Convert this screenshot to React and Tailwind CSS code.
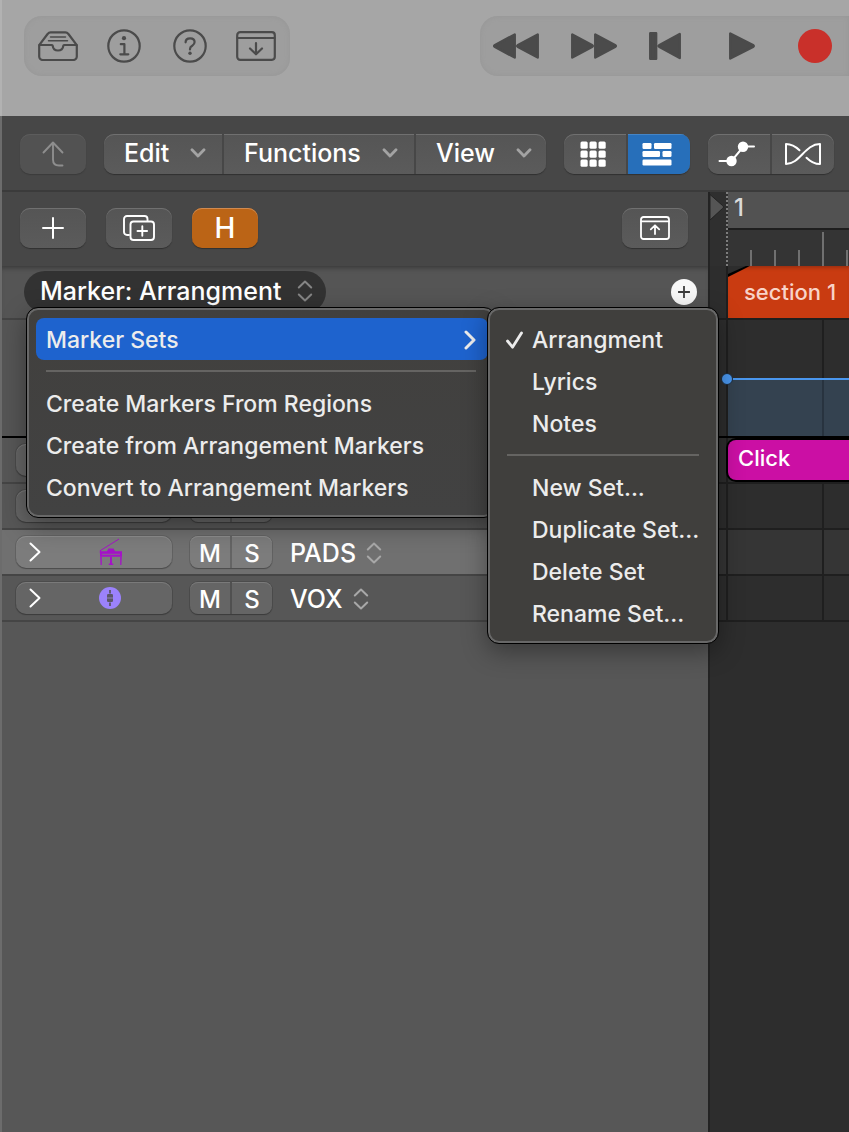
import clsx from 'clsx';

const TICKS = Array.from({ length: 40 }, (_, i) => i);

const RAISED = 'bg-gradient-to-b from-[#555555] to-[#5b5b5b] shadow-[inset_0_1px_0_#707070,0_1px_1px_#303030]';

function InboxIcon() {
  return (
    <svg width="40" height="30" viewBox="0 0 40 30" fill="none" stroke="currentColor" strokeWidth="2.2" strokeLinejoin="round" strokeLinecap="round" aria-hidden="true">
      <path d="M1.2 14.2 9.6 3c.8-1 1.6-1.6 3-1.6h14.8c1.4 0 2.2.6 3 1.6l8.4 11.2V25.500a3.500 3.500 0 0 1-3.500 3.500H4.700A3.500 3.500 0 0 1 1.200 25.500Z" />
      <path d="M1.500 14H14c.4 0 .6.3.7.8.4 3.100 2.500 4.700 5.300 4.700s4.900-1.600 5.300-4.700c.1-.5.3-.8.7-.8h12.500" />
      <path strokeWidth="1.500" d="M12.500 6h15M10.500 9.800h19" />
    </svg>
  );
}

function InfoIcon() {
  return (
    <svg width="34" height="34" viewBox="0 0 34 34" fill="none" stroke="currentColor" strokeWidth="2.2" strokeLinecap="round" strokeLinejoin="round" aria-hidden="true">
      <circle cx="17" cy="17" r="15.700" />
      <circle cx="17" cy="9.200" r="2.100" fill="currentColor" stroke="none" />
      <path d="M13.800 15.200h3.600v10M13.300 25.300h8" />
    </svg>
  );
}

function HelpIcon() {
  return (
    <svg width="34" height="34" viewBox="0 0 34 34" fill="none" stroke="currentColor" strokeWidth="2.2" strokeLinecap="round" strokeLinejoin="round" aria-hidden="true">
      <circle cx="17" cy="17" r="15.700" />
      <path d="M12.600 13.300c0-2.400 1.800-4 4.500-4 2.600 0 4.500 1.500 4.500 3.800 0 1.800-.9 2.700-2.400 3.700-1.500.9-2.200 1.700-2.200 3.100v.5" />
      <circle cx="17" cy="24.300" r="1.700" fill="currentColor" stroke="none" />
    </svg>
  );
}

function WindowDownIcon() {
  return (
    <svg width="40" height="30" viewBox="0 0 40 30" fill="none" stroke="currentColor" strokeWidth="2.2" strokeLinecap="round" strokeLinejoin="round" aria-hidden="true">
      <rect x="1.200" y="1.200" width="37.600" height="27.600" rx="3" />
      <path d="M1.500 7h37M20 12v11M14 17.500l6 5.800 6-5.800" />
    </svg>
  );
}

function WindowUpIcon() {
  return (
    <svg width="30" height="24" viewBox="0 0 30 24" fill="none" stroke="currentColor" strokeWidth="1.800" strokeLinecap="round" strokeLinejoin="round" aria-hidden="true">
      <rect x="1" y="1" width="28" height="22" rx="2.500" />
      <path d="M1.500 5.300h27M15 18V9.500M10.800 13.300 15 9.300l4.200 4" />
    </svg>
  );
}

function RewindIcon() {
  return (
    <svg width="46" height="26" viewBox="0 0 46 26" fill="currentColor" stroke="currentColor" strokeWidth="2.500" strokeLinejoin="round" aria-hidden="true">
      <path d="M21.700 1.500v23L2 14q-1.600-1 0-2ZM44.700 1.500v23L25 14q-1.600-1 0-2Z" />
    </svg>
  );
}

function ForwardIcon() {
  return (
    <svg width="46" height="26" viewBox="0 0 46 26" fill="currentColor" stroke="currentColor" strokeWidth="2.500" strokeLinejoin="round" aria-hidden="true">
      <path d="M1.300 1.500v23L21 14q1.600-1 0-2ZM24.300 1.500v23L44 14q1.600-1 0-2Z" />
    </svg>
  );
}

function ToStartIcon() {
  return (
    <svg width="32" height="28" viewBox="0 0 32 28" fill="currentColor" stroke="currentColor" strokeWidth="2.500" strokeLinejoin="round" aria-hidden="true">
      <path d="M1.300 1.300h5.800v25.400H1.300ZM30.700 2v24L10.500 15q-1.600-1 0-2Z" />
    </svg>
  );
}

function PlayIcon() {
  return (
    <svg width="26" height="28" viewBox="0 0 26 28" fill="currentColor" stroke="currentColor" strokeWidth="2.500" strokeLinejoin="round" aria-hidden="true">
      <path d="M1.300 1.500v25L24 15q1.500-1 0-2Z" />
    </svg>
  );
}

function UpLevelIcon() {
  return (
    <svg width="22" height="26" viewBox="0 0 22 26" fill="none" stroke="currentColor" strokeWidth="1.900" strokeLinecap="round" strokeLinejoin="round" aria-hidden="true">
      <path d="M1.500 11.500 11 1.500l9.500 10M11 2v16.500c0 4 2.200 6 6 6h3.500" />
    </svg>
  );
}

function ChevronDown() {
  return (
    <svg width="16" height="10" viewBox="0 0 16 10" fill="none" stroke="#a3a3a3" strokeWidth="2.800" strokeLinecap="round" strokeLinejoin="round" aria-hidden="true">
      <path d="M2 1.800 8 8l6-6.200" />
    </svg>
  );
}

function UpDownIcon({ className }) {
  return (
    <svg width="16" height="22" viewBox="0 0 16 22" fill="none" stroke="currentColor" strokeWidth="2" strokeLinecap="round" strokeLinejoin="round" className={className} aria-hidden="true">
      <path d="M1.800 7.500 8 1.500l6.200 6M1.800 14.500l6.200 6 6.200-6" />
    </svg>
  );
}

function GridIcon() {
  return (
    <svg width="26" height="26" viewBox="0 0 26 26" fill="currentColor" aria-hidden="true">
      {[0, 9, 18].map((y) => [0, 9, 18].map((x) => <rect key={`${x}-${y}`} x={x + 0.500} y={y + 0.500} width="7.200" height="7.200" rx="1.500" />))}
    </svg>
  );
}

function TracksIcon() {
  return (
    <svg width="30" height="24" viewBox="0 0 30 24" fill="currentColor" aria-hidden="true">
      <rect x="0.500" y="1" width="9" height="6" rx="1.200" />
      <rect x="12" y="1" width="17.500" height="6" rx="1.200" />
      <rect x="0.500" y="9" width="17.500" height="6" rx="1.200" />
      <rect x="20.500" y="9" width="9" height="6" rx="1.200" />
      <rect x="0.500" y="17.500" width="29" height="6" rx="1.200" />
    </svg>
  );
}

function AutomationIcon() {
  return (
    <svg width="38" height="26" viewBox="0 0 38 26" fill="none" stroke="currentColor" strokeWidth="2" strokeLinecap="round" aria-hidden="true">
      <path d="M1.500 20h12l12-14.500H36" />
      <circle cx="13.500" cy="20" r="5.200" fill="currentColor" stroke="none" />
      <circle cx="25" cy="5.800" r="5.200" fill="currentColor" stroke="none" />
    </svg>
  );
}

function FlexIcon() {
  return (
    <svg width="36" height="22" viewBox="0 0 36 22" fill="none" stroke="currentColor" strokeWidth="2" strokeLinecap="round" strokeLinejoin="round" aria-hidden="true">
      <path d="M1 1v20C15 21 20 1 35 1v20c-6 0-10-2.800-13.500-6.300M1 1c6 0 10 2.800 13.500 6.300" />
    </svg>
  );
}

function PlusIcon() {
  return (
    <svg width="22" height="22" viewBox="0 0 22 22" stroke="currentColor" strokeWidth="2" strokeLinecap="round" aria-hidden="true">
      <path d="M11 1v20M1 11h20" />
    </svg>
  );
}

function DuplicateIcon() {
  return (
    <svg width="32" height="26" viewBox="0 0 32 26" fill="none" stroke="currentColor" strokeWidth="1.900" strokeLinecap="round" strokeLinejoin="round" aria-hidden="true">
      <path d="M6 20H4a3 3 0 0 1-3-3V4a3 3 0 0 1 3-3h17.500a3 3 0 0 1 3 3v1.500" />
      <rect x="7.500" y="6.500" width="23.500" height="18.500" rx="3" />
      <path d="M19.300 11.200v9.600M14.500 16h9.600" />
    </svg>
  );
}

function DisclosureIcon() {
  return (
    <svg width="12" height="20" viewBox="0 0 12 20" fill="none" stroke="currentColor" strokeWidth="2" strokeLinecap="round" strokeLinejoin="round" aria-hidden="true">
      <path d="m1.500 1.500 9 8.500-9 8.500" />
    </svg>
  );
}

function PianoIcon() {
  return (
    <svg width="24" height="28" viewBox="0 0 24 28" fill="#a512c8" aria-hidden="true">
      <path d="M1 12.800 20 1M1.300 12.300v3" stroke="#a512c8" strokeWidth="1" />
      <path d="M9.500 10.500h5l1.500 2.800h7v5.500H1v-5.500h7Z" />
      <path d="M3 16.300h18" stroke="#7c7c7c" strokeWidth="0.800" />
      <path d="M1.200 18.800h1.600v8.200H1.600ZM21.200 18.800h1.600l-.4 8.200h-1.200ZM11 18.800h2v6.700h1.200V27H9.800v-1.500H11Z" />
    </svg>
  );
}

function KnobIcon() {
  return (
    <svg width="22" height="22" viewBox="0 0 22 22" aria-hidden="true">
      <circle cx="11" cy="11" r="11" fill="#9b82fb" />
      <path d="M11 3v3.500M11 15.500V19" stroke="#5b5668" strokeWidth="1.800" />
      <rect x="8" y="7" width="6" height="8" rx="1.200" fill="#5b5668" />
      <path d="M8 11h6" stroke="#8d83b8" strokeWidth="1" />
    </svg>
  );
}

function IconButton({ label, className, children }) {
  return (
    <button type="button" aria-label={label} className={clsx('flex items-center justify-center', className)}>
      {children}
    </button>
  );
}

function TransportBar() {
  return (
    <header className="flex h-[116px] shrink-0 items-start gap-[190px] overflow-hidden border-l-2 border-[#b2b2b2] bg-[#a6a6a6] pt-4 pl-[22px] text-[#4b4b4b]">
      <div className="flex h-[60px] w-[266px] shrink-0 items-center justify-between rounded-[18px] bg-[#9e9e9e] px-[14px] shadow-[inset_0_0_5px_#969696]">
        <IconButton label="Library" className="w-10"><InboxIcon /></IconButton>
        <IconButton label="Inspector" className="w-10"><InfoIcon /></IconButton>
        <IconButton label="Quick Help" className="w-10"><HelpIcon /></IconButton>
        <IconButton label="Toolbar" className="w-10"><WindowDownIcon /></IconButton>
      </div>
      <div className="flex h-[60px] flex-1 items-center rounded-l-[18px] bg-[#9e9e9e] pl-[13px] shadow-[inset_0_0_5px_#969696]">
        <IconButton label="Rewind" className="mr-8 shrink-0"><RewindIcon /></IconButton>
        <IconButton label="Forward" className="mr-8 shrink-0"><ForwardIcon /></IconButton>
        <IconButton label="Go to Beginning" className="mr-12 shrink-0"><ToStartIcon /></IconButton>
        <IconButton label="Play" className="mr-[43px] shrink-0"><PlayIcon /></IconButton>
        <IconButton label="Record" className="size-[34px] shrink-0 rounded-full bg-[#c9302a]" />
      </div>
    </header>
  );
}

function MenuButton({ label, className }) {
  return (
    <button type="button" aria-haspopup="menu" className={clsx('flex items-center justify-between pb-0.5 pl-5', className)}>
      <span>{label}</span>
      <ChevronDown />
    </button>
  );
}

function ToolBar() {
  return (
    <div className="flex h-[76px] shrink-0 items-center gap-[18px] overflow-hidden border-b-2 border-b-[#3b3b3b] bg-[#474747] pt-0.5 pl-[18px] text-[25px] leading-8 font-medium text-white">
      <IconButton label="Up One Level" className="h-10 w-[66px] shrink-0 rounded-[10px] bg-[#525252] text-[#8e8e8e] shadow-[inset_0_1px_0_#5c5c5c,0_1px_1px_#3b3b3b]">
        <UpLevelIcon />
      </IconButton>
      <div className={clsx('flex h-10 shrink-0 divide-x-2 divide-[#474747] overflow-hidden rounded-[10px]', RAISED)}>
        <MenuButton label="Edit" className="w-[120px] pr-4" />
        <MenuButton label="Functions" className="w-48 pr-4" />
        <MenuButton label="View" className="w-[130px] pr-[14px]" />
      </div>
      <div className={clsx('flex h-10 shrink-0 divide-x-2 divide-[#474747] overflow-hidden rounded-[10px]', RAISED)}>
        <IconButton label="Live Loops" className="w-16 pr-1"><GridIcon /></IconButton>
        <IconButton label="Tracks" className="w-[62px] bg-[#276fba] pr-1 shadow-[inset_0_1px_0_#4585c6]"><TracksIcon /></IconButton>
      </div>
      <div className={clsx('flex h-10 shrink-0 divide-x-2 divide-[#474747] overflow-hidden rounded-[10px]', RAISED)}>
        <IconButton label="Automation" className="w-16 pr-1"><AutomationIcon /></IconButton>
        <IconButton label="Flex" className="w-[62px]"><FlexIcon /></IconButton>
      </div>
    </div>
  );
}

const PANEL = 'absolute rounded-[12px] border border-black pt-[10px] pb-[9px] text-[#ececec] shadow-[inset_0_0_0_2px_#686868,0_8px_24px_rgba(0,0,0,0.35)]';

function Separator({ className }) {
  return (
    <div role="separator" className={clsx('flex h-[22px] items-center', className)}>
      <div className="h-0.5 flex-1 bg-[#656462]" />
    </div>
  );
}

function MarkerSetMenu() {
  const sets = ['Arrangment', 'Lyrics', 'Notes'];
  const actions = ['New Set...', 'Duplicate Set...', 'Delete Set', 'Rename Set...'];
  const item = 'flex h-[42px] w-full items-center pt-0.5 pl-[18px] text-left';
  return (
    <div role="menu" aria-label="Marker Sets" className={clsx(PANEL, '-top-px left-[460px] w-[232px] bg-[#403f3d]')}>
      {sets.map((name, i) => (
        <button key={name} type="button" role="menuitemradio" aria-checked={i === 0} className={item}>
          <span className="w-[26px]">
            {i === 0 && (
              <svg width="18" height="18" viewBox="0 0 18 18" fill="none" stroke="currentColor" strokeWidth="2.800" strokeLinecap="round" strokeLinejoin="round" aria-hidden="true">
                <path d="m1.500 10 5 6.200L15.500 2" />
              </svg>
            )}
          </span>
          {name}
        </button>
      ))}
      <Separator className="mx-[19px]" />
      {actions.map((name) => (
        <button key={name} type="button" role="menuitem" className={item}>
          <span className="w-[26px]" />
          {name}
        </button>
      ))}
    </div>
  );
}

function MarkerMenu() {
  const actions = ['Create Markers From Regions', 'Create from Arrangement Markers', 'Convert to Arrangement Markers'];
  return (
    <div role="menu" aria-label="Marker" className={clsx(PANEL, 'top-[41px] left-6 z-10 w-[470px] bg-gradient-to-b from-[#41403e] to-[#424242] px-[9px] text-[23px] leading-7 font-medium')}>
      <button type="button" role="menuitem" aria-haspopup="menu" className="flex h-[42px] w-[452px] items-center justify-between rounded-lg bg-[#1e63ce] pt-0.5 pr-3 pl-[10px] text-left">
        Marker Sets
        <svg width="12" height="20" viewBox="0 0 12 20" fill="none" stroke="currentColor" strokeWidth="3" strokeLinecap="round" strokeLinejoin="round" aria-hidden="true">
          <path d="m2 2 8 8-8 8" />
        </svg>
      </button>
      <Separator className="mx-[10px]" />
      {actions.map((name) => (
        <button key={name} type="button" role="menuitem" className="flex h-[42px] w-full items-center pt-0.5 pl-[10px] text-left">
          {name}
        </button>
      ))}
      <MarkerSetMenu />
    </div>
  );
}

function TrackHeader({ name, icon, selected }) {
  const face = selected
    ? 'bg-[#7c7c7c] shadow-[inset_0_1px_0_#8e8e8e,0_1px_1px_#4c4c4c,0_0_0_1px_#646464]'
    : 'bg-[#656565] shadow-[inset_0_1px_0_#7a7a7a,0_1px_1px_#3c3c3c,0_0_0_1px_#4c4c4c]';
  return (
    <div className={clsx('flex h-[46px] items-center border-b-2 border-[#454545] pl-[14px] font-medium text-white', selected ? 'bg-[#707070]' : 'bg-[#575757]')}>
      <button type="button" aria-label="Track details" className={clsx('flex h-8 w-[156px] items-center gap-[58px] rounded-[10px] pl-[13px]', face)}>
        {icon && <DisclosureIcon />}
        {icon}
      </button>
      <div className={clsx('ml-[18px] flex h-8 divide-x-2 overflow-hidden rounded-lg text-2xl', face, selected ? 'divide-[#646464]' : 'divide-[#505050]')}>
        <button type="button" aria-label="Mute" className="w-[42px] pt-0.5">{name && 'M'}</button>
        <button type="button" aria-label="Solo" className="w-10 pt-0.5">{name && 'S'}</button>
      </div>
      {name && (
        <button type="button" className="ml-[18px] flex items-center gap-[10px] pt-0.5 text-[25px] leading-8">
          {name}
          <UpDownIcon className="text-[#a8a8a8]" />
        </button>
      )}
    </div>
  );
}

function TrackHeaders() {
  return (
    <div className="flex w-[706px] shrink-0 flex-col bg-[#575757]">
      <div className="flex h-[74px] items-center gap-5 bg-[#474747] pr-5 pb-0.5 pl-[18px] text-white">
        <IconButton label="Add Track" className={clsx('h-10 w-[66px] rounded-[10px]', RAISED)}><PlusIcon /></IconButton>
        <IconButton label="Duplicate Track" className={clsx('h-10 w-[66px] rounded-[10px]', RAISED)}><DuplicateIcon /></IconButton>
        <button type="button" aria-label="Hide Tracks" className="h-10 w-[66px] rounded-[10px] bg-[#bb6416] text-[28px] leading-10 font-medium shadow-[inset_0_1px_0_#d08a50,0_1px_1px_#303030]">
          H
        </button>
        <IconButton label="Global Tracks" className={clsx('ml-auto h-10 w-[66px] rounded-[10px]', RAISED)}><WindowUpIcon /></IconButton>
      </div>
      <div className="relative flex h-[54px] items-center justify-between border-b-2 border-[#444444] bg-[#555555] pr-[11px] pl-[22px] shadow-[inset_0_5px_5px_-3px_#3a3a3a]">
        <button type="button" aria-haspopup="menu" aria-expanded="true" className="flex h-[42px] w-[302px] items-center justify-between rounded-full bg-[#323232] pr-[13px] pb-0.5 pl-4 text-[25px] leading-8 font-medium text-white">
          Marker: Arrangment
          <UpDownIcon className="text-[#858585]" />
        </button>
        <IconButton label="Create Marker" className="size-[26px] rounded-full bg-[#f7f7f7] text-[#3c3c3c]">
          <svg width="12" height="12" viewBox="0 0 12 12" stroke="currentColor" strokeWidth="1.800" strokeLinecap="round" aria-hidden="true">
            <path d="M6 .5v11M.5 6h11" />
          </svg>
        </IconButton>
        <MarkerMenu />
      </div>
      <div className="h-[118px] border-b-2 border-black bg-[#555555]" />
      <TrackHeader />
      <TrackHeader />
      <TrackHeader name="PADS" icon={<PianoIcon />} selected />
      <TrackHeader name="VOX" icon={<KnobIcon />} />
    </div>
  );
}

function Lane({ className, children }) {
  return (
    <div className={clsx('flex border-b-2 border-[#1f1f1f] pl-4', className)}>
      <div className="flex flex-1 border-l-2 border-[#1f1f1f]">{children || <GridCells />}</div>
    </div>
  );
}

function GridCells() {
  return <div className="flex-1 bg-[repeating-linear-gradient(to_right,transparent_0_94px,#1f1f1f_94px_96px)]" />;
}

function Timeline() {
  return (
    <div className="flex min-w-0 flex-1 flex-col overflow-hidden border-l-2 border-[#232323] bg-[#2d2d2d]">
      <div className="flex h-[74px] bg-[#2f2f2f]">
        <svg width="16" height="32" viewBox="0 0 16 32" className="shrink-0" aria-hidden="true">
          <path d="M0 2.500 12.500 13.500q2.500 1.500 0 3L0 28Z" fill="#555555" stroke="#232323" strokeWidth="1" />
        </svg>
        <div className="flex flex-1 flex-col border-l-2 border-dotted border-[#7d7d7d]">
          <div className="h-[38px] border-b-2 border-[#1e1e1e] bg-[#525252] pl-[6px] text-2xl leading-8 font-medium text-[#dadada]">1</div>
          <div className="flex h-9 items-end gap-[22px] overflow-hidden bg-[#343434] pl-[22px]">
            {TICKS.map((i) => (
              <div key={i} className={clsx('w-0.5 shrink-0 bg-[#707070]', i % 4 === 3 ? 'h-[34px]' : 'h-4')} />
            ))}
          </div>
        </div>
      </div>
      <Lane className="h-[54px]">
        <div className="flex flex-1 bg-black [clip-path:polygon(0_8px,18px_0,100%_0,100%_100%,0_100%)]">
          <div className="flex flex-1 items-center bg-[#c93b11] pl-4 text-[22px] font-medium whitespace-nowrap text-[#f8d3c8] shadow-[inset_0_4px_4px_-3px_#8a2a0e] [clip-path:polygon(0_11px,22px_0,100%_0,100%_100%,0_100%)]">
            section 1
          </div>
        </div>
      </Lane>
      <Lane className="h-[118px] border-b-black">
        <div className="relative flex flex-1 flex-col">
          <div className="flex h-[58px]"><GridCells /></div>
          <div className="flex flex-1 border-t-2 border-[#4a97ee] bg-[#344250]">
            <div className="flex-1 bg-[repeating-linear-gradient(to_right,transparent_0_94px,#28333f_94px_96px)]" />
          </div>
          <div className="absolute top-[53px] -left-[7px] size-3 rounded-full border border-[#1c2a38] bg-[#4a97ee]" />
        </div>
      </Lane>
      <Lane className="h-[46px]">
        <button type="button" className="my-0.5 flex h-10 flex-1 items-center rounded-l-lg bg-[#cb0fa4] pb-1 pl-[10px] text-[22px] leading-7 font-medium text-white shadow-[0_0_0_2px_#000]">
          Click
        </button>
      </Lane>
      <Lane className="h-[46px]" />
      <Lane className="h-[46px] bg-[#353535]" />
      <Lane className="h-[46px]" />
    </div>
  );
}

function App() {
  return (
    <div className="flex min-h-screen flex-col overflow-hidden bg-[#474747] font-[Inter,'Liberation_Sans',sans-serif]">
      <TransportBar />
      <main className="flex flex-1 flex-col border-l-2 border-[#6c6c6c]">
        <ToolBar />
        <div className="flex flex-1">
          <TrackHeaders />
          <Timeline />
        </div>
      </main>
    </div>
  );
}

export default App;
